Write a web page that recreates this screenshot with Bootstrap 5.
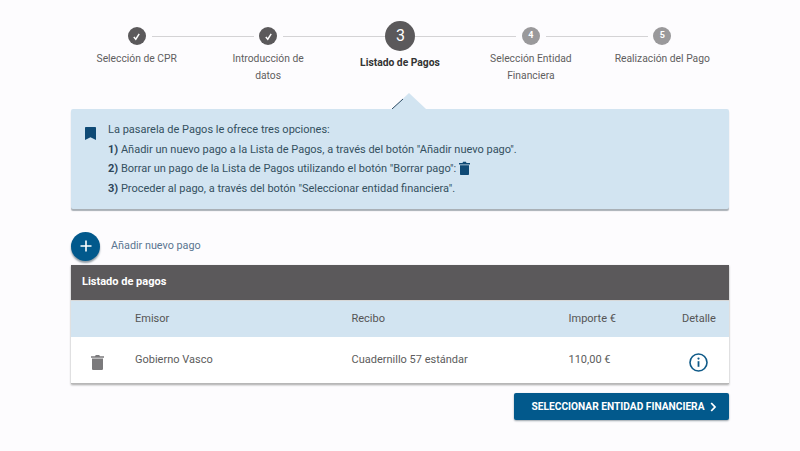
<!DOCTYPE html>
<html lang="es">
<head>
<meta charset="utf-8">
<title>Listado de Pagos</title>
<link rel="stylesheet" href="https://cdn.jsdelivr.net/npm/bootstrap@5.3.0/dist/css/bootstrap.min.css">
<style>
html,body{height:451px;overflow:hidden}
body{background:#fdfcfe;font-family:Roboto,"Liberation Sans",sans-serif;color:#555;font-size:11px}
.page-wrap{width:658px;margin-left:71px}
.stepper{height:93px;padding-top:21px}
.step-item{width:131.4px;position:relative;text-align:center}
.step-head{height:30px}
.step-line{position:absolute;top:15px;height:1px;background:#d4d3d5;left:calc(50% + 15px);width:102px}
.step-dot{width:18px;height:18px;border-radius:50%;color:#fff;background:#5b595b;font-size:9px;font-weight:700;z-index:1}
.step-dot.is-todo{background:#9a999b}
.step-dot.is-now{width:30px;height:30px;font-size:16px;font-weight:400;position:relative;left:1px}
.step-label{color:#5f5e60;font-size:10.3px;line-height:17px;margin-top:-1px;padding:0 17px}
.step-label.is-now{color:#333;font-weight:700;margin-top:3px;padding:0 0 0 1px}
.info-panel{position:relative;top:16px;height:100px;background:#d2e4f1;border-radius:2px;box-shadow:0 2px 1px #a9b0b6;padding:11px 19px 0 14px;color:#34505f;font-size:11px}
.info-tip{position:absolute;left:321px;top:-16px;width:34px;height:16px}
.info-mark{margin:7px 12px 0 0;color:#0f4a75;flex:none}
.info-line{line-height:19.7px}
.info-line b{color:#2c4559}
.bin-inline{vertical-align:-3px;color:#0f4a75}
.add-row{margin-top:38px;height:31px;margin-bottom:3px}
.add-btn{width:29px;height:29px;border-radius:50%;background:#02598c;border:0;padding:0;color:#fff;box-shadow:0 2px 2px #8e9aa3;flex:none;margin-top:-1px}
.add-label{color:#5a7590;font-size:10.8px;margin-left:11px;margin-top:-1px}
.pay-card{background:#fff;box-shadow:0 1px 2px #a5a5a5;border-bottom:1px solid #b7b7b7;height:119px}
.pay-title{height:36px;background:#5b595b;color:#fff;font-weight:700;padding:0 11px;border-bottom:1px solid #d7d7d7;font-size:11px}
.pay-row{display:grid;grid-template-columns:64px 216.5px 217px 1fr 47px;align-items:center}
.pay-head{height:36px;background:#d2e4f1;color:#555}
.pay-body{height:46px;color:#5c5c5c}
.pay-bin{padding-left:20px;color:#7b7a7c;padding-top:3px}
.detail-ico{margin-left:7px;margin-top:4px}
.go-btn{width:215px;height:27px;margin-top:9px;background:#02598c;color:#fff;font-weight:700;font-size:10.2px;border:0;border-radius:2px;box-shadow:0 1px 2px #9aa3aa;padding:0 0 0 6px}
.go-btn:hover{background:#02598c;color:#fff}
.go-chev{margin-left:6px}
</style>
</head>
<body>
<main class="page-wrap">
  <div class="stepper d-flex">
    <div class="step-item">
      <div class="step-head d-flex justify-content-center align-items-center"><span class="step-dot d-flex align-items-center justify-content-center"><svg width="9" height="9" viewBox="0 0 10 10"><path d="M2 5.500 4.200 8 8 2" fill="none" stroke="#fff" stroke-width="1.600"/></svg></span></div>
      <span class="step-line"></span>
      <div class="step-label">Selección de CPR</div>
    </div>
    <div class="step-item">
      <div class="step-head d-flex justify-content-center align-items-center"><span class="step-dot d-flex align-items-center justify-content-center"><svg width="9" height="9" viewBox="0 0 10 10"><path d="M2 5.500 4.200 8 8 2" fill="none" stroke="#fff" stroke-width="1.600"/></svg></span></div>
      <span class="step-line"></span>
      <div class="step-label">Introducción de datos</div>
    </div>
    <div class="step-item">
      <div class="step-head d-flex justify-content-center align-items-center"><span class="step-dot is-now d-flex align-items-center justify-content-center">3</span></div>
      <span class="step-line"></span>
      <div class="step-label is-now">Listado de Pagos</div>
    </div>
    <div class="step-item">
      <div class="step-head d-flex justify-content-center align-items-center"><span class="step-dot is-todo d-flex align-items-center justify-content-center">4</span></div>
      <span class="step-line"></span>
      <div class="step-label">Selección Entidad Financiera</div>
    </div>
    <div class="step-item">
      <div class="step-head d-flex justify-content-center align-items-center"><span class="step-dot is-todo d-flex align-items-center justify-content-center">5</span></div>
      <div class="step-label">Realización del Pago</div>
    </div>
  </div>

  <section class="info-panel d-flex">
    <svg class="info-tip" viewBox="0 0 34 16"><path d="M0 16 17 0 34 16Z" fill="#d2e4f1"/><path d="M0 16 11 6" stroke="#2b4a63" stroke-width="1" fill="none"/></svg>
    <svg class="info-mark" width="11" height="13" viewBox="0 0 11 13"><path d="M0 1C0 .4.4 0 1 0h9c.6 0 1 .4 1 1v12L5.500 10.300 0 13Z" fill="currentColor"/></svg>
    <div>
      <div class="info-line">La pasarela de Pagos le ofrece tres opciones:</div>
      <div class="info-line"><b>1)</b> Añadir un nuevo pago a la Lista de Pagos, a través del botón "Añadir nuevo pago".</div>
      <div class="info-line"><b>2)</b> Borrar un pago de la Lista de Pagos utilizando el botón "Borrar pago": <svg class="bin-inline" width="11" height="14" viewBox="0 0 11 14"><path d="M0 2h3.500l.6-1.200h2.800L7.500 2H11v1.400H0ZM1 4.200h9V13c0 .6-.4 1-1 1H2c-.6 0-1-.4-1-1Z" fill="currentColor"/></svg></div>
      <div class="info-line"><b>3)</b> Proceder al pago, a través del botón "Seleccionar entidad financiera".</div>
    </div>
  </section>

  <div class="add-row d-flex align-items-center">
    <button class="add-btn d-flex align-items-center justify-content-center" type="button" aria-label="Añadir"><svg width="12" height="12" viewBox="0 0 12 12"><path d="M6 .5v11M.5 6h11" stroke="#fff" stroke-width="1.600"/></svg></button>
    <span class="add-label">Añadir nuevo pago</span>
  </div>

  <section class="pay-card">
    <div class="pay-title d-flex align-items-center">Listado de pagos</div>
    <div class="pay-row pay-head"><span></span><span>Emisor</span><span>Recibo</span><span>Importe €</span><span>Detalle</span></div>
    <div class="pay-row pay-body">
      <span class="pay-bin"><svg class="d-block" width="13" height="16" viewBox="0 0 13 18" preserveAspectRatio="none"><path d="M0 2.500h4l.8-1.500h3.400L9 2.500h4v1.700H0ZM1 5.200h11V16.500c0 .8-.6 1.500-1.400 1.500H2.400C1.600 18 1 17.300 1 16.500Z" fill="currentColor"/></svg></span>
      <span>Gobierno Vasco</span>
      <span>Cuadernillo 57 estándar</span>
      <span>110,00 €</span>
      <span><svg class="d-block detail-ico" width="19" height="19" viewBox="0 0 19 19"><circle cx="9.500" cy="9.500" r="8.500" fill="none" stroke="#0f5a88" stroke-width="1.600"/><path d="M9.500 8.200v5.600" stroke="#0f5a88" stroke-width="1.800"/><circle cx="9.500" cy="5.600" r="1.100" fill="#0f5a88"/></svg></span>
    </div>
  </section>

  <div class="d-flex justify-content-end">
    <button class="btn go-btn d-flex align-items-center justify-content-center" type="button">SELECCIONAR ENTIDAD FINANCIERA<svg class="go-chev" width="7" height="10" viewBox="0 0 7 10"><path d="M1.200 1 5 5 1.200 9" fill="none" stroke="#fff" stroke-width="1.800"/></svg></button>
  </div>
</main>
</body>
</html>
